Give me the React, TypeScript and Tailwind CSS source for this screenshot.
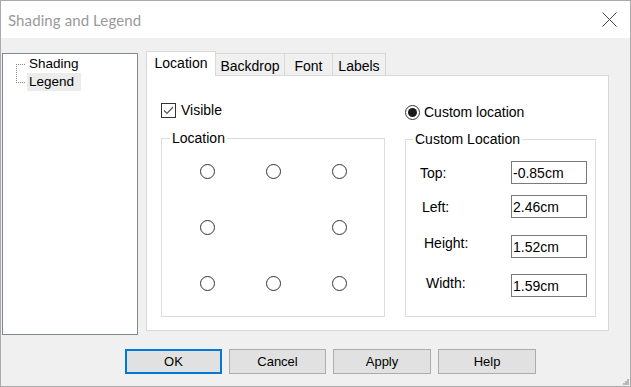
import React from "react";

const tabs = [
  { label: "Location", w: "w-[70px]", active: true },
  { label: "Backdrop", w: "w-[69px]", active: false },
  { label: "Font", w: "w-[48px]", active: false },
  { label: "Labels", w: "w-[53px]", active: false },
];

function Radio({ checked = false }: { checked?: boolean }) {
  return (
    <div className="w-[15px] h-[15px] rounded-full border border-[#333333] bg-white flex items-center justify-center">
      {checked && <div className="w-[9px] h-[9px] rounded-full bg-[#1a1a1a]" />}
    </div>
  );
}

function Field({ label, value, labelCls, rowCls }: { label: string; value: string; labelCls: string; rowCls: string }) {
  return (
    <div className={`flex items-center h-[23px] ${rowCls}`}>
      <span className={labelCls}>{label}</span>
      <div className="ml-auto mr-[8px] w-[76px] h-[23px] border border-[#7a7a7a] bg-white pl-[1px] flex items-center text-black">
        {value}
      </div>
    </div>
  );
}

export default function App() {
  return (
    <div className="relative w-[631px] h-[387px] border border-[#aaaaaa] bg-[#f0f0f0] flex flex-col text-[14px] text-black font-['Liberation_Sans',Arial,sans-serif] leading-[16px]">
      {/* title bar */}
      <div className="h-[37px] bg-white flex items-center justify-between pl-[7px] pr-[13px] shrink-0">
        <span className="text-[15px] text-[#999999] font-['Segoe_UI',Lato,sans-serif] tracking-[0.1px]">Shading and Legend</span>
        <svg width="15" height="15" viewBox="0 0 15 15" className="text-[#444444]">
          <path d="M0.5 0.5 L14.5 14.5 M14.5 0.5 L0.5 14.5" stroke="currentColor" strokeWidth="1" fill="none" />
        </svg>
      </div>

      <div className="flex pt-[13px] pl-[1px]">
        {/* tree */}
        <div className="mt-[2px] w-[136px] h-[282px] border border-[#828790] bg-white flex pl-[13px] pt-[1px] text-[13.5px]">
          <svg width="11" height="36">
            <path d="M0.5 9 V27.5 M0 9.5 H10 M0 27.5 H10" stroke="#8a8a8a" strokeWidth="1" strokeDasharray="1 1" fill="none" />
          </svg>
          <div className="flex flex-col">
            <div className="h-[18px] px-[2px] flex items-center">Shading</div>
            <div className="h-[18px] px-[2px] flex items-center bg-[#ececec]">Legend</div>
          </div>
        </div>

        {/* tab control */}
        <div className="ml-[8px] w-[463px] flex flex-col">
          <div className="flex items-end h-[24px]">
            {tabs.map((t) =>
              t.active ? (
                <div
                  key={t.label}
                  className={`${t.w} h-[25px] -mb-px relative z-10 bg-white border border-b-0 border-[#d9d9d9] flex items-start justify-center pt-[3px]`}
                >
                  {t.label}
                </div>
              ) : (
                <div
                  key={t.label}
                  className={`${t.w} h-[22px] bg-[#f0f0f0] border border-l-0 border-b-0 border-[#d9d9d9] flex items-center justify-center pt-[2px]`}
                >
                  {t.label}
                </div>
              )
            )}
          </div>
          <div className="h-[256px] bg-white border border-[#d9d9d9] flex pl-[14px]">
            {/* left column */}
            <div className="w-[224px] flex flex-col pt-[26px]">
              <div className="flex items-center gap-[5px]">
                <div className="w-[15px] h-[15px] border border-[#333333] bg-white flex items-center justify-center">
                  <svg width="13" height="13" viewBox="0 0 13 13">
                    <polyline points="2,6.5 5,9.5 11,3" stroke="#555555" strokeWidth="1.2" fill="none" />
                  </svg>
                </div>
                <span>Visible</span>
              </div>
              <fieldset className="mt-[12px] h-[187px] border border-[#dcdcdc] px-0">
                <legend className="ml-[8px] px-[2px] leading-[16px]">Location</legend>
                <div className="grid grid-cols-[15px_15px_15px] gap-x-[51px] gap-y-[41px] pl-[38px] pt-[18px]">
                  <Radio />
                  <Radio />
                  <Radio />
                  <Radio />
                  <div />
                  <Radio />
                  <Radio />
                  <Radio />
                  <Radio />
                </div>
              </fieldset>
            </div>

            {/* right column */}
            <div className="ml-[20px] w-[191px] flex flex-col pt-[28px]">
              <div className="flex items-center gap-[4px]">
                <Radio checked />
                <span>Custom location</span>
              </div>
              <fieldset className="mt-[11px] h-[186px] border border-[#dcdcdc] px-0">
                <legend className="ml-[7px] px-[2px] leading-[16px]">Custom Location</legend>
                <div className="flex flex-col pt-[14px]">
                  <Field label="Top:" value="-0.85cm" labelCls="pl-[14px]" rowCls="" />
                  <Field label="Left:" value="2.46cm" labelCls="pl-[16px]" rowCls="mt-[11px]" />
                  <Field label="Height:" value="1.52cm" labelCls="pl-[18px] mb-[8px]" rowCls="mt-[17px]" />
                  <Field label="Width:" value="1.59cm" labelCls="pl-[20px] mb-[6px]" rowCls="mt-[16px]" />
                </div>
              </fieldset>
            </div>
          </div>
        </div>
      </div>

      {/* buttons */}
      <div className="flex gap-[7px] mt-[14px] pl-[124px] text-[13px]">
        <button className="w-[97px] h-[25px] bg-[#e1e1e1] border-2 border-[#0078d7] flex items-center justify-center">OK</button>
        <button className="w-[97px] h-[25px] bg-[#e1e1e1] border border-[#adadad] flex items-center justify-center">Cancel</button>
        <button className="w-[98px] h-[25px] bg-[#e1e1e1] border border-[#adadad] flex items-center justify-center">Apply</button>
        <button className="w-[98px] h-[25px] bg-[#e1e1e1] border border-[#adadad] flex items-center justify-center">Help</button>
      </div>

      {/* size grip */}
      <svg width="9" height="9" className="absolute right-0 bottom-0">
        <rect x="6" y="2" width="2" height="2" fill="#b8b8b8" />
        <rect x="4" y="4" width="2" height="2" fill="#b8b8b8" />
        <rect x="6" y="4" width="2" height="2" fill="#b8b8b8" />
        <rect x="2" y="6" width="2" height="2" fill="#b8b8b8" />
        <rect x="4" y="6" width="2" height="2" fill="#b8b8b8" />
        <rect x="6" y="6" width="2" height="2" fill="#b8b8b8" />
      </svg>
    </div>
  );
}
